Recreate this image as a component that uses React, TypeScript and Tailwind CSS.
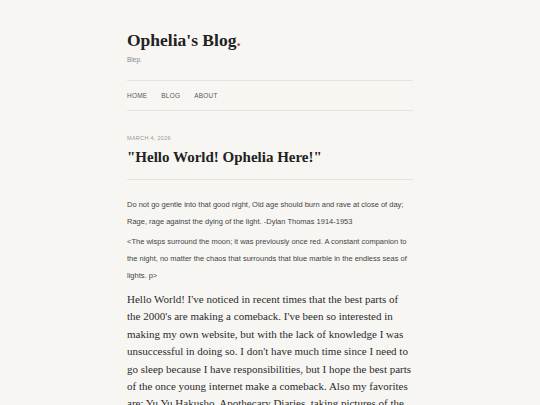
import React from 'react';

const serif = "font-['Liberation_Serif',serif]";
const sans = "font-['Liberation_Sans',sans-serif]";

export default function App() {
  return (
    <div className="min-h-screen bg-[#f7f6f3] text-[#2b2b2b]">
      <div className="mx-auto w-[286px] pt-[30px]">
        {/* Header */}
        <header>
          <h1 className={`${serif} text-[17.5px] leading-[20px] font-bold text-[#222]`}>
            Ophelia's Blog<span className="text-[#c24a2c]">.</span>
          </h1>
          <p className={`${sans} mt-[6px] text-[6.5px] leading-[8px] text-[#8a8884]`}>Blep.</p>
        </header>

        <nav className={`${sans} mt-[16px] border-t border-b border-[#e6e4df] py-[10.5px]`}>
          <ul className="flex gap-[14px] text-[6.5px] leading-[8px] tracking-[0.2px] uppercase text-[#5a5a5a]">
            <li>Home</li>
            <li>Blog</li>
            <li>About</li>
          </ul>
        </nav>

        {/* Post */}
        <article className="mt-[24px]">
          <div className={`${sans} text-[5.5px] leading-[7px] tracking-[0.3px] uppercase text-[#9a9893]`}>March 4, 2026</div>
          <h2 className={`${serif} mt-[5px] text-[15px] leading-[20px] font-bold text-[#222]`}>
            "Hello World! Ophelia Here!"
          </h2>
          <div className="mt-[12px] border-t border-[#e6e4df]" />

          <div className={`${sans} mt-[16px] text-[7.5px] leading-[17px] text-[#444]`}>
            <p>
              Do not go gentle into that good night, Old age should burn and rave at close of day; Rage, rage against the dying of the light. -Dylan Thomas 1914-1953
            </p>
            <p className="mt-[3px]">
              &lt;The wisps surround the moon; it was previously once red. A constant companion to the night, no matter the chaos that surrounds that blue marble in the endless seas of lights. p&gt;
            </p>
          </div>

          <p className={`${serif} mt-[7px] text-[11px] leading-[17.4px] text-[#2b2b2b]`}>
            Hello World! I've noticed in recent times that the best parts of the 2000's are making a comeback. I've been so interested in making my own website, but with the lack of knowledge I was unsuccessful in doing so. I don't have much time since I need to go sleep because I have responsibilities, but I hope the best parts of the once young internet make a comeback. Also my favorites are: Yu Yu Hakusho, Apothecary Diaries, taking pictures of the sky, and listening to music late at night.
          </p>
        </article>
      </div>
    </div>
  );
}
